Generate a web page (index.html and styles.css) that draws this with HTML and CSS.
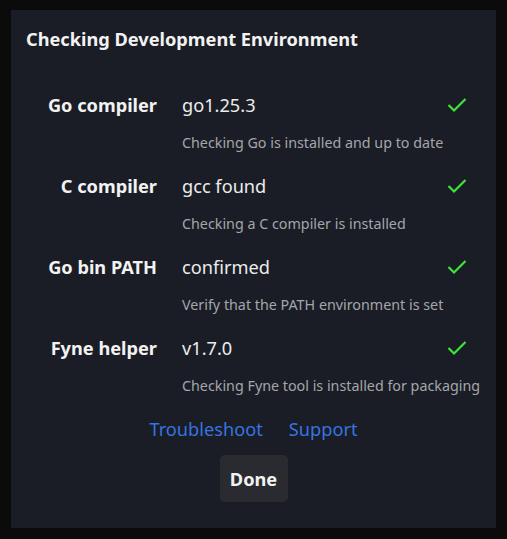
FILE: index.html
```html
<!DOCTYPE html>
<html>
<head>
<meta charset="utf-8">
<link rel="stylesheet" href="styles.css">
</head>
<body>
<div class="panel">
  <div class="title">Checking Development Environment</div>
  <div class="form">
    <div class="label">Go compiler</div>
    <div class="cell">
      <div class="value">go1.25.3</div>
      <div class="desc">Checking Go is installed and up to date</div>
    </div>
    <div class="check"><svg viewBox="0 0 20 16" width="20" height="16"><path d="M1.5 8 L7 13.5 L18.5 2" fill="none" stroke="#3fe43a" stroke-width="2.2"/></svg></div>

    <div class="label">C compiler</div>
    <div class="cell">
      <div class="value">gcc found</div>
      <div class="desc">Checking a C compiler is installed</div>
    </div>
    <div class="check"><svg viewBox="0 0 20 16" width="20" height="16"><path d="M1.5 8 L7 13.5 L18.5 2" fill="none" stroke="#3fe43a" stroke-width="2.2"/></svg></div>

    <div class="label">Go bin PATH</div>
    <div class="cell">
      <div class="value">confirmed</div>
      <div class="desc">Verify that the PATH environment is set</div>
    </div>
    <div class="check"><svg viewBox="0 0 20 16" width="20" height="16"><path d="M1.5 8 L7 13.5 L18.5 2" fill="none" stroke="#3fe43a" stroke-width="2.2"/></svg></div>

    <div class="label">Fyne helper</div>
    <div class="cell">
      <div class="value">v1.7.0</div>
      <div class="desc">Checking Fyne tool is installed for packaging</div>
    </div>
    <div class="check"><svg viewBox="0 0 20 16" width="20" height="16"><path d="M1.5 8 L7 13.5 L18.5 2" fill="none" stroke="#3fe43a" stroke-width="2.2"/></svg></div>
  </div>
  <div class="links">
    <a class="link">Troubleshoot</a>
    <a class="link">Support</a>
  </div>
  <div class="actions">
    <button class="done">Done</button>
  </div>
</div>
</body>
</html>
```

FILE: styles.css
```css
html, body {
  margin: 0;
  padding: 0;
  background: #0b0b0b;
}
body {
  width: 507px;
  height: 539px;
  padding: 10px 11px;
  box-sizing: border-box;
  font-family: "Noto Sans", "Open Sans", sans-serif;
  overflow: hidden;
}
.panel {
  width: 485px;
  height: 518px;
  background: #1a1d25;
  box-sizing: border-box;
  padding-top: 17px;
}
.title {
  padding-left: 15px;
  font-size: 18.2px;
  font-weight: 700;
  color: #f2f2f2;
  line-height: 24px;
}
.form {
  margin-top: 42px;
  margin-left: 36px;
  display: grid;
  grid-template-columns: 110px 290px 20px;
  column-gap: 0;
  row-gap: 21px;
}
.label {
  text-align: right;
  font-weight: 700;
  font-size: 18.2px;
  line-height: 24px;
  color: #f2f2f2;
  white-space: nowrap;
}
.cell {
  padding-left: 25px;
  min-width: 0;
}
.value {
  font-size: 18.2px;
  line-height: 24px;
  color: #ececec;
}
.desc {
  margin-top: 16px;
  font-size: 14.3px;
  line-height: 20px;
  color: #a4a6ab;
  white-space: nowrap;
}
.check {
  height: 24px;
  display: flex;
  align-items: center;
}
.check svg { display: block; }
.links {
  margin-top: 21px;
  display: flex;
  justify-content: center;
  gap: 26px;
}
.link {
  font-size: 18.2px;
  line-height: 24px;
  color: #3574e0;
}
.actions {
  margin-top: 14px;
  display: flex;
  justify-content: center;
}
.done {
  width: 68px;
  height: 47px;
  border: none;
  border-radius: 5px;
  background: #2a2b30;
  color: #f2f2f2;
  font-family: "Noto Sans", "Open Sans", sans-serif;
  font-weight: 700;
  font-size: 18.2px;
  padding: 0;
}
```
